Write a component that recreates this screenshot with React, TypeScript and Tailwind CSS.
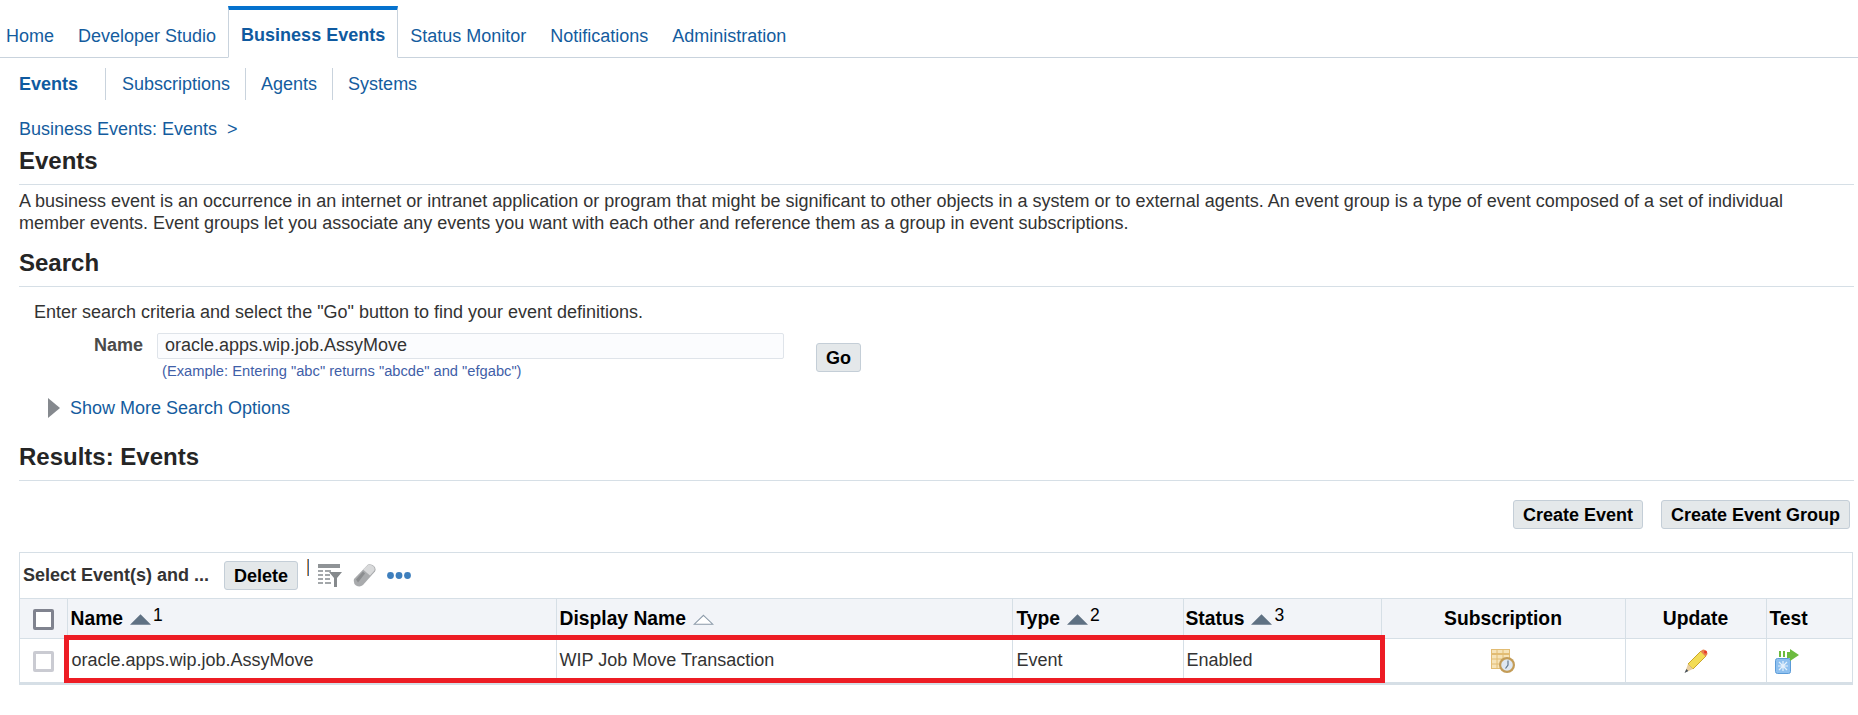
import type { ReactNode } from "react";

const LINK = "text-[#145c9e]";

function SortUp({ n, filled = true }: { n?: number; filled?: boolean }) {
  return (
    <span className="inline-flex items-start ml-[7px]">
      <svg width="21" height="11" viewBox="0 0 20 10" className="mt-[6px]">
        {filled ? (
          <path d="M10 0 L20 10 L0 10 Z" fill="#5f7183" />
        ) : (
          <path d="M10 1 L18.800 9.500 L1.200 9.500 Z" fill="#fff" stroke="#8a99a8" />
        )}
      </svg>
      {n && <span className="text-[17.500px] font-normal leading-[15px] ml-[2px]">{n}</span>}
    </span>
  );
}

function QbeIcon() {
  return (
    <svg width="24" height="23" viewBox="0 0 24 23">
      <path d="M0 0h22v4H0z" fill="#8f9396" />
      <path d="M0 6h5v2H0zM7 6h6v2H7zM0 10h5v2H0zM7 10h5v2H7zM0 14h5v2H0zM7 14h5v2H7zM0 18h5v2H0zM7 18h6v2H7z" fill="#a3a7aa" />
      <path d="M11 8h13l-5 6v9h-3v-9z" fill="#85898c" />
    </svg>
  );
}

function EraserIcon() {
  return (
    <svg width="23" height="23" viewBox="0 0 23 23">
      <path d="M15 0.500 Q18 -0.500 21 2 Q23.500 5 22 7.500 L10 21 Q7 23.500 3 21.500 Q0 19 1 15 Z" fill="#a9abad" />
      <path d="M15 1 Q18 0 20.500 2.500 Q22.500 5 21 7 L17 11.500 L10 5.500 Z" fill="#d8d9da" />
      <path d="M3 15.500 L10 7.500 L12 9.500 L5 18.500 Z" fill="#8b8d8f" />
    </svg>
  );
}

function DotsIcon() {
  return (
    <svg width="24" height="7" viewBox="0 0 24 7">
      <circle cx="3.500" cy="3.500" r="3.400" fill="#3e7fbd" />
      <circle cx="12" cy="3.500" r="3.400" fill="#3e7fbd" />
      <circle cx="20.500" cy="3.500" r="3.400" fill="#3e7fbd" />
    </svg>
  );
}

function SubscriptionIcon() {
  return (
    <svg width="24" height="24" viewBox="0 0 24 24">
      <rect x="0.500" y="0.500" width="18" height="19" fill="#f6e3b8" stroke="#e2bc73" />
      <path d="M0 5h19" stroke="#e2bc73" strokeWidth="2" />
      <path d="M0 10h19M0 15h19M6 0v20M12 0v20" stroke="#e2bc73" />
      <circle cx="16" cy="16" r="8" fill="#c39c57" />
      <circle cx="16" cy="16" r="5.800" fill="#dfe8f2" />
      <path d="M17 11.500v4.500l-2.500 3.500" stroke="#62788f" strokeWidth="1.200" fill="none" />
    </svg>
  );
}

function PencilIcon() {
  return (
    <svg width="24" height="24" viewBox="0 0 24 24">
      <path d="M4 15 L17 2 L22 7 L9 20 Z" fill="#f3dc55" stroke="#c9a52c" />
      <path d="M16.500 2.500 L18 1 Q19.500 0 21 1 L23 3 Q24 4.500 23 6 L21.500 7.500 Z" fill="#e8824f" />
      <circle cx="21.500" cy="3" r="1.500" fill="#e8382b" />
      <path d="M4 15 L9 20 L1 23.500 Z" fill="#e9cfa0" />
      <path d="M2.400 20 L4.400 22 L0.500 24 Z" fill="#44505c" />
    </svg>
  );
}

function TestIcon() {
  return (
    <svg width="25" height="25" viewBox="0 0 25 25">
      <rect x="0.500" y="9.500" width="15" height="15" rx="2" fill="#8ec0ef" stroke="#5b9bd8" />
      <path d="M4 13l8 8M12 13l-8 8M8 12v10M3 17h10" stroke="#e4f0fb" strokeWidth="1.200" />
      <path d="M4 2h2v6H4zM8 2h2v6H8z" fill="#6cbb3f" />
      <path d="M12 3h3V0l9 6-9 6V9h-3z" fill="#6cbb3f" />
    </svg>
  );
}

function Heading({ children }: { children: ReactNode }) {
  return (
    <div className="border-b border-[#d6dfe6] text-[24px] font-bold text-[#252525] leading-[26px] pb-[10px]">
      {children}
    </div>
  );
}

function Button({ children, className = "" }: { children: ReactNode; className?: string }) {
  return (
    <button className={`h-[29px] rounded-[3px] border border-[#c4ced7] bg-[#e4e8ea] text-[18px] font-bold text-black leading-none ${className}`}>
      {children}
    </button>
  );
}

const TH = "border-l border-[#d6dfe6] px-[3px] pt-[2px] text-[19.300px] font-bold text-black text-left align-middle";
const TD = "border-l border-[#d6dfe6] px-[3px] text-[#333] align-middle";

export default function App() {
  const tabs = ["Home", "Developer Studio", "Business Events", "Status Monitor", "Notifications", "Administration"];

  return (
    <div className="w-[1858px] h-[715px] overflow-hidden bg-white text-[18px] text-[#333] font-['Liberation_Sans',Arial,sans-serif]">
      <div className="h-[58px] pt-[6px] border-b border-[#c9d3dd] flex items-end">
        {tabs.map((t) =>
          t === "Business Events" ? (
            <div
              key={t}
              className="h-[52px] -mb-px flex items-center pt-[3px] px-[12px] ml-[12px] mr-[12px] bg-white border-x border-[#c9d3dd] border-t-[4px] border-t-[#0572ce] border-b border-b-white font-bold text-[#0f5aa0]"
            >
              {t}
            </div>
          ) : (
            <div key={t} className={`h-[48px] pt-[7px] flex items-center ${LINK} ${t === "Home" ? "ml-[6px]" : ""} ${t === "Administration" || t === "Notifications" ? "ml-[24px]" : ""} ${t === "Developer Studio" ? "ml-[24px]" : ""}`}>
              {t}
            </div>
          )
        )}
      </div>

      <div className="h-[32px] mt-[10px] pl-[19px] flex items-stretch">
        <div className="w-[86px] flex items-center font-bold text-[#0f5aa0]">Events</div>
        <div className={`border-l border-[#c9d3dd] pl-[16px] pr-[15px] flex items-center ${LINK}`}>Subscriptions</div>
        <div className={`border-l border-[#c9d3dd] pl-[15px] pr-[15px] flex items-center ${LINK}`}>Agents</div>
        <div className={`border-l border-[#c9d3dd] pl-[15px] flex items-center ${LINK}`}>Systems</div>
      </div>

      <div className="pl-[19px] pr-[4px]">
        <div className={`mt-[18px] leading-[22px] ${LINK}`}>Business Events: Events&nbsp;&nbsp;&gt;</div>
        <div className="mt-[8px]">
          <Heading>Events</Heading>
        </div>
        <div className="mt-[5px] leading-[22px] text-[#333]">
          A business event is an occurrence in an internet or intranet application or program that might be significant to other objects in a system or to external agents. An event group is a type of event composed of a set of individual
          <br />
          member events. Event groups let you associate any events you want with each other and reference them as a group in event subscriptions.
        </div>
        <div className="mt-[16px]">
          <Heading>Search</Heading>
        </div>

        <div className="pl-[15px] mt-[14px] leading-[22px]">Enter search criteria and select the "Go" button to find your event definitions.</div>
        <div className="flex mt-[9px]">
          <div className="w-[138px] h-[26px] flex items-center justify-end pr-[14px] font-bold text-[#4a4a4a]">Name</div>
          <div className="w-[627px]">
            <input
              readOnly
              value="oracle.apps.wip.job.AssyMove"
              className="w-full h-[26px] px-[7px] rounded-[2px] border border-[#dfe4ea] bg-[#fbfcfe] text-[#333] outline-none"
            />
            <div className="text-[14.700px] leading-[18px] mt-[3px] pl-[5px] text-[#3f60a8]">(Example: Entering "abc" returns "abcde" and "efgabc")</div>
          </div>
          <Button className="ml-[32px] mt-[11px] w-[45px]">Go</Button>
        </div>

        <div className="flex items-center mt-[16px] pl-[28px] h-[24px]">
          <svg width="14" height="20" viewBox="0 0 14 20">
            <path d="M1 0 L13 10 L1 20 Z" fill="#85898e" />
          </svg>
          <span className={`ml-[9px] ${LINK}`}>Show More Search Options</span>
        </div>

        <div className="mt-[24px]">
          <Heading>Results: Events</Heading>
        </div>

        <div className="flex justify-end gap-[18px] mt-[19px] pr-[4px]">
          <Button className="w-[130px]">Create Event</Button>
          <Button className="w-[189px]">Create Event Group</Button>
        </div>

        <div className="relative mt-[23px] w-[1834px] border border-[#d6dfe6] border-b-[3px]">
          <div className="h-[45px] flex items-center pl-[3px]">
            <span className="font-bold text-[18px] text-[#333] w-[201px]">Select Event(s) and ...</span>
            <Button className="w-[74px]">Delete</Button>
            <div className="w-[2px] h-[17px] ml-[9px] mb-[17px] bg-[#3e6ea8] border-l border-[#d9914a]" />
            <div className="ml-[9px] flex items-center gap-[11px]">
              <QbeIcon />
              <EraserIcon />
              <DotsIcon />
            </div>
          </div>
          <table className="w-full table-fixed border-collapse">
            <colgroup>
              <col className="w-[47px]" />
              <col className="w-[489px]" />
              <col className="w-[456px]" />
              <col className="w-[171px]" />
              <col className="w-[198px]" />
              <col className="w-[244px]" />
              <col className="w-[141px]" />
              <col />
            </colgroup>
            <thead>
              <tr className="h-[40px] bg-[#f2f4f8] border-y border-[#d6dfe6]">
                <th className="text-center align-middle">
                  <span className="inline-block w-[21px] h-[21px] ml-px rounded-[2px] border-[3px] border-[#80838f] bg-white align-middle" />
                </th>
                <th className={TH}>Name<SortUp n={1} /></th>
                <th className={TH}>Display Name<SortUp filled={false} /></th>
                <th className={`${TH} !pl-[4px]`}>Type<SortUp n={2} /></th>
                <th className={`${TH} !pl-[2px]`}>Status<SortUp n={3} /></th>
                <th className={`${TH} !text-center`}>Subscription</th>
                <th className={`${TH} !text-center`}>Update</th>
                <th className={TH}>Test</th>
              </tr>
            </thead>
            <tbody>
              <tr className="h-[43px]">
                <td className="text-center align-middle">
                  <span className="inline-block w-[21px] h-[21px] rounded-[2px] border-[3px] border-[#cacbd2] bg-white align-middle" />
                </td>
                <td className={`${TD} !pl-[4px]`}>oracle.apps.wip.job.AssyMove</td>
                <td className={TD}>WIP Job Move Transaction</td>
                <td className={`${TD} !pl-[4px]`}>Event</td>
                <td className={TD}>Enabled</td>
                <td className={`${TD} text-center`}><span className="inline-flex align-middle"><SubscriptionIcon /></span></td>
                <td className={`${TD} text-center`}><span className="inline-flex align-middle"><PencilIcon /></span></td>
                <td className={TD}><span className="inline-flex align-middle ml-[5px]"><TestIcon /></span></td>
              </tr>
            </tbody>
          </table>
          <div className="absolute left-[44px] top-[82px] w-[1321px] h-[48px] border-[5px] border-[#ed1c24]" />
        </div>
      </div>
    </div>
  );
}
